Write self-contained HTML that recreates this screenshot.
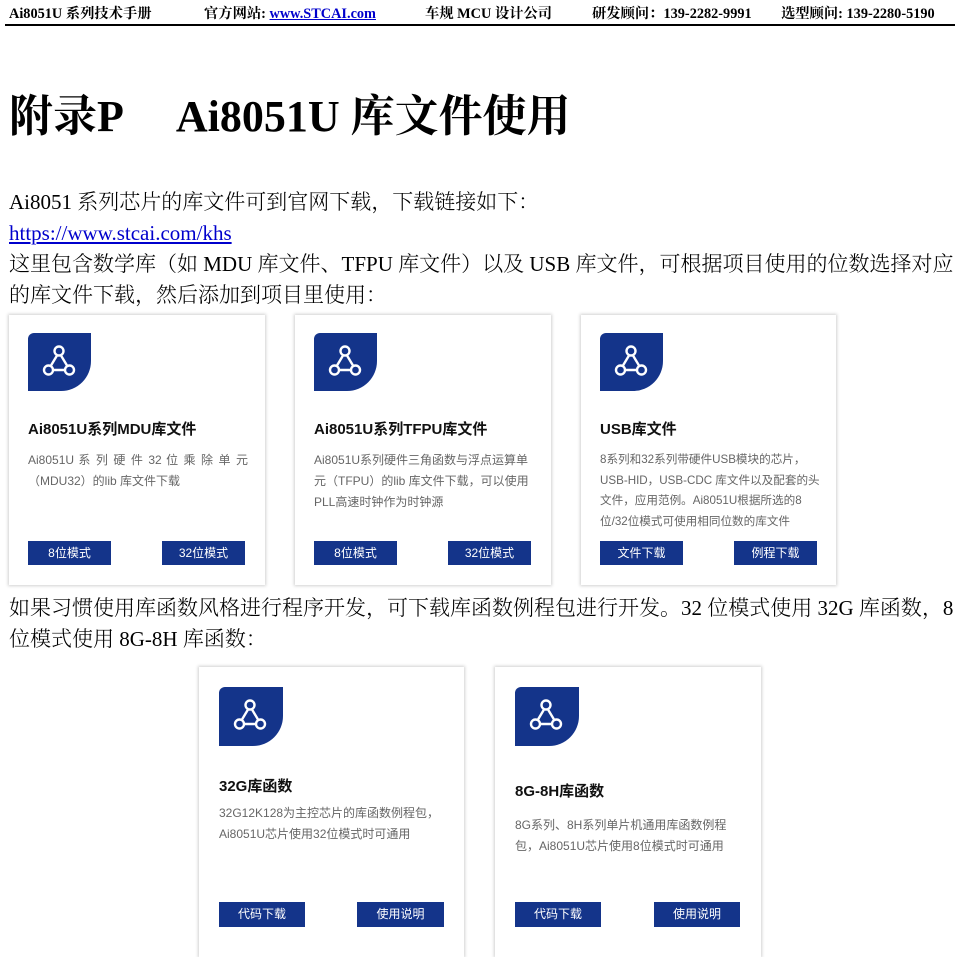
<!DOCTYPE html>
<html><head><meta charset="utf-8"><style>
*{margin:0;padding:0;box-sizing:border-box}
body{width:958px;height:948px;overflow:hidden;background:#fff;position:relative;font-family:"Liberation Serif","Noto Serif CJK SC",serif;color:#000}
.a{position:absolute;white-space:nowrap}
.hdr{font-weight:bold;font-size:14.3px;top:5px;line-height:18px}
.card{position:absolute;background:#fff;box-shadow:0 0 3px 1px rgba(0,0,0,0.18)}
.ic{position:absolute;width:63px;height:58px;background:#14348a;border-radius:6px 0 30px 0}
.ic svg{position:absolute;left:13px;top:10px}
.t{position:absolute;font-family:"Liberation Sans","Noto Sans CJK SC",sans-serif;font-weight:bold;font-size:15px;color:#111;white-space:nowrap}
.d{position:absolute;font-family:"Liberation Sans","Noto Sans CJK SC",sans-serif;font-size:12px;color:#666;line-height:21px}
.b{position:absolute;height:24px;background:#14348a;color:#fff;font-family:"Liberation Sans","Noto Sans CJK SC",sans-serif;font-size:12px;text-align:center;line-height:24px}
.p{font-size:21px;left:9px;line-height:26px;font-weight:300}
</style></head><body>
<div class="a hdr" style="left:9px">Ai8051U 系列技术手册</div>
<div class="a hdr" style="left:204px">官方网站: <span style="color:#0000cc;text-decoration:underline">www.STCAI.com</span></div>
<div class="a hdr" style="left:425px">车规 MCU 设计公司</div>
<div class="a hdr" style="left:592px">研发顾问：139-2282-9991</div>
<div class="a hdr" style="left:781px">选型顾问: 139-2280-5190</div>
<div style="position:absolute;left:5px;top:24px;width:950px;height:2px;background:#000"></div>
<div class="a" style="left:9px;top:90px;font-size:44px;font-weight:bold;line-height:54px">附录P<span style="display:inline-block;width:52px"></span>Ai8051U 库文件使用</div>
<div class="a p" style="top:189px">Ai8051 系列芯片的库文件可到官网下载，下载链接如下：</div>
<div class="a p" style="top:220px;color:#0000cc;text-decoration:underline">https://www.stcai.com/khs</div>
<div class="a p" style="top:251px;letter-spacing:0">这里包含数学库（如 MDU 库文件、TFPU 库文件）以及 USB 库文件，可根据项目使用的位数选择对应</div>
<div class="a p" style="top:282px">的库文件下载，然后添加到项目里使用：</div>
<div class="a p" style="top:595px">如果习惯使用库函数风格进行程序开发，可下载库函数例程包进行开发。32 位模式使用 32G 库函数，8</div>
<div class="a p" style="top:626px">位模式使用 8G-8H 库函数：</div>

<svg width="0" height="0" style="position:absolute"><defs><g id="tri" fill="none" stroke="#fff" stroke-width="2.4"><circle cx="18" cy="8" r="4.5"/><circle cx="7.5" cy="27" r="4.5"/><circle cx="28.5" cy="27" r="4.5"/><path d="M16 12.5L10 22.5M20 12.5L26 22.5M12 27H24"/></g></defs></svg>

<div class="card" style="left:9px;top:315px;width:256px;height:270px">
<div class="ic" style="left:19px;top:18px"><svg width="36" height="36"><use href="#tri"/></svg></div>
<div class="t" style="left:19px;top:103px">Ai8051U系列MDU库文件</div>
<div class="d" style="left:19px;top:135px;width:220px;text-align:justify">Ai8051U 系 列 硬 件 32 位 乘 除 单 元 （MDU32）的lib 库文件下载</div>
<div class="b" style="left:19px;top:226px;width:83px">8位模式</div>
<div class="b" style="left:153px;top:226px;width:83px">32位模式</div>
</div>
<div class="card" style="left:295px;top:315px;width:256px;height:270px">
<div class="ic" style="left:19px;top:18px"><svg width="36" height="36"><use href="#tri"/></svg></div>
<div class="t" style="left:19px;top:103px">Ai8051U系列TFPU库文件</div>
<div class="d" style="left:19px;top:135px;width:222px">Ai8051U系列硬件三角函数与浮点运算单元（TFPU）的lib 库文件下载，可以使用PLL高速时钟作为时钟源</div>
<div class="b" style="left:19px;top:226px;width:83px">8位模式</div>
<div class="b" style="left:153px;top:226px;width:83px">32位模式</div>
</div>
<div class="card" style="left:581px;top:315px;width:255px;height:270px">
<div class="ic" style="left:19px;top:18px"><svg width="36" height="36"><use href="#tri"/></svg></div>
<div class="t" style="left:19px;top:103px">USB库文件</div>
<div class="d" style="left:19px;top:135px;width:222px;font-size:11.6px;line-height:20.5px">8系列和32系列带硬件USB模块的芯片，USB-HID，USB-CDC 库文件以及配套的头文件，应用范例。Ai8051U根据所选的8位/32位模式可使用相同位数的库文件</div>
<div class="b" style="left:19px;top:226px;width:83px">文件下载</div>
<div class="b" style="left:153px;top:226px;width:83px">例程下载</div>
</div>

<div class="card" style="left:199px;top:667px;width:265px;height:290px">
<div class="ic" style="left:20px;top:20px;width:64px;height:59px"><svg width="36" height="36"><use href="#tri"/></svg></div>
<div class="t" style="left:20px;top:108px">32G库函数</div>
<div class="d" style="left:20px;top:136px;width:232px">32G12K128为主控芯片的库函数例程包，Ai8051U芯片使用32位模式时可通用</div>
<div class="b" style="left:20px;top:235px;width:86px;height:25px">代码下载</div>
<div class="b" style="left:158px;top:235px;width:87px;height:25px">使用说明</div>
</div>
<div class="card" style="left:495px;top:667px;width:266px;height:290px">
<div class="ic" style="left:20px;top:20px;width:64px;height:59px"><svg width="36" height="36"><use href="#tri"/></svg></div>
<div class="t" style="left:20px;top:113px">8G-8H库函数</div>
<div class="d" style="left:20px;top:148px;width:232px">8G系列、8H系列单片机通用库函数例程包，Ai8051U芯片使用8位模式时可通用</div>
<div class="b" style="left:20px;top:235px;width:86px;height:25px">代码下载</div>
<div class="b" style="left:159px;top:235px;width:86px;height:25px">使用说明</div>
</div>
</body></html>
